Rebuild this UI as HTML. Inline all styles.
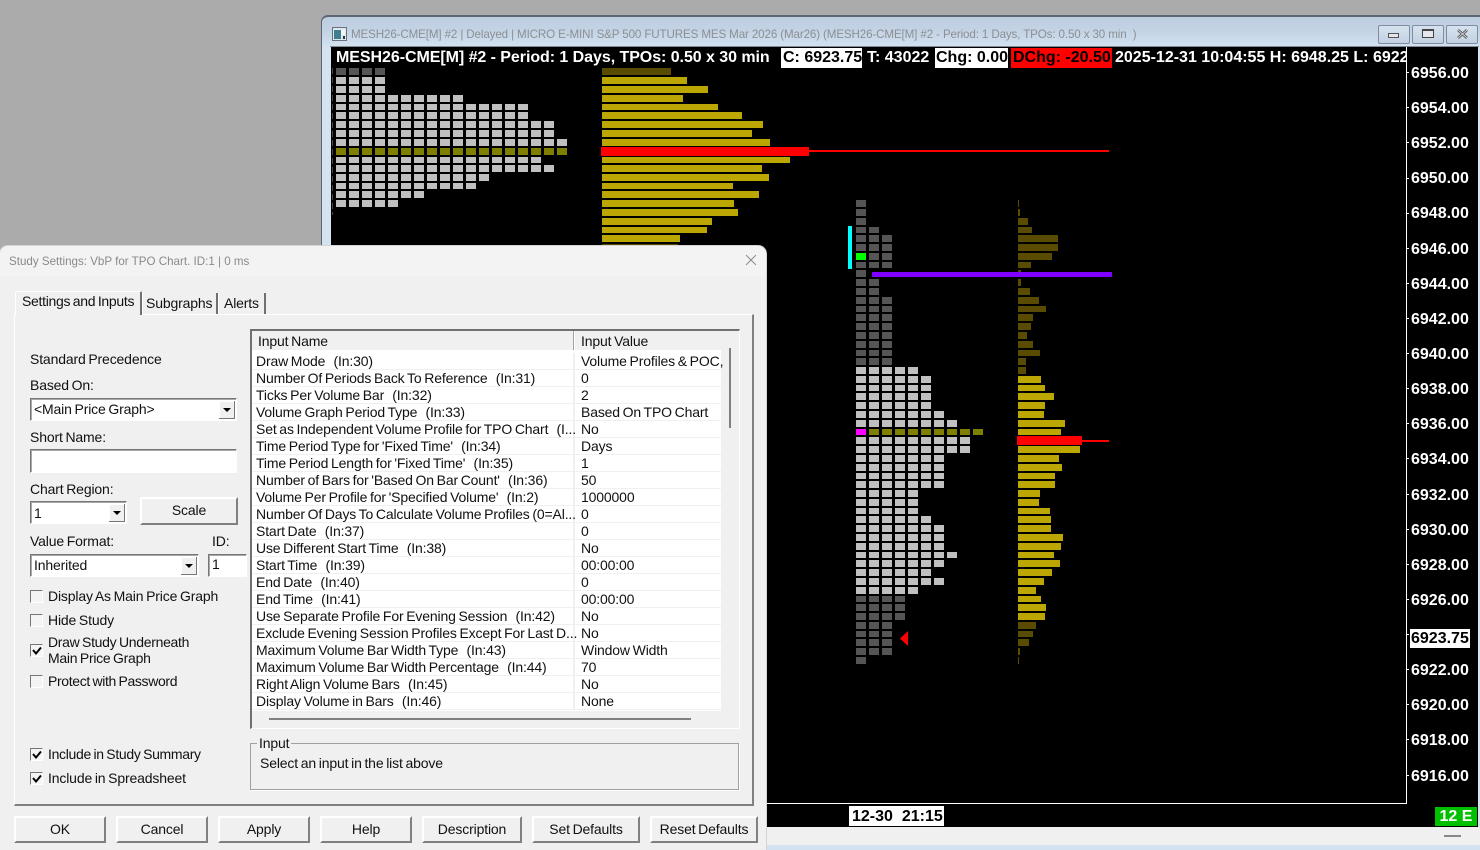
<!DOCTYPE html>
<html><head><meta charset="utf-8"><title>Study Settings</title>
<style>
html,body{margin:0;padding:0;width:1480px;height:850px;overflow:hidden;background:#ababab}
body{position:relative;font-family:"Liberation Sans",Arial,sans-serif}
div,span,i,b{position:absolute;white-space:pre}
i{display:block;height:7px}
i.s{height:6px}
.g{background:repeating-linear-gradient(90deg,#c0c0c0 0 10px,#000 10px 13px)}
.d{background:repeating-linear-gradient(90deg,#555 0 10px,#000 10px 13px)}
.o{background:repeating-linear-gradient(90deg,#808000 0 10px,#000 10px 13px)}
.v{background:#bca602}
.w{background:#594c00}
.c{font:bold 16px/20px "Liberation Sans",Arial,sans-serif;color:#fff;top:48px;height:20px}
.p{font:bold 16px/18px "Liberation Sans",Arial,sans-serif;color:#fff;left:1411px}
.k{background:#fff;left:1407px;width:2px;height:1px}
.t{font:14px/18px "Liberation Sans",Arial,sans-serif;color:#111;letter-spacing:-.15px;word-spacing:-1px}
.f{background:#fff;border-top:1px solid #777;border-left:1px solid #777;border-right:1px solid #fff;border-bottom:1px solid #fff;box-shadow:inset 1px 1px 0 #a8a8a8;box-sizing:border-box}
.a{right:2px;top:2px;width:16px;height:18px;background:#f0f0f0;border-right:1px solid #777;border-bottom:1px solid #777;box-shadow:inset 1px 1px 0 #fff;box-sizing:border-box}
.a:after{content:"";position:absolute;left:4px;top:7px;border-left:4px solid transparent;border-right:4px solid transparent;border-top:4px solid #000}
.b{top:816px;height:27px;background:#f0f0f0;border-top:2px solid #fff;border-left:2px solid #fff;border-right:2px solid #808080;border-bottom:2px solid #808080;box-sizing:border-box;text-align:center;font:14px/23px "Liberation Sans",Arial,sans-serif;color:#111;letter-spacing:-.15px;word-spacing:-1px}
.x{left:30px;width:13px;height:13px;background:#f4f4f4;border-top:1px solid #777;border-left:1px solid #777;border-right:1px solid #fff;border-bottom:1px solid #fff;box-sizing:border-box}
.x svg{position:absolute;left:1px;top:1px}
.r{left:252px;width:469px;height:16px;border-bottom:1px solid #f0f0f0;font:14px/16px "Liberation Sans",Arial,sans-serif;color:#111;background:#fff;letter-spacing:-.15px;word-spacing:-1px}
.r span{left:4px;top:0}
.r b{font-weight:normal;left:329px;top:0}
.r u{position:absolute;left:321px;top:0;width:2px;height:17px;background:#f0f0f0}
</style></head><body>

<!-- chart window -->
<div style="left:321px;top:15px;width:1159px;height:835px;background:linear-gradient(#bccde0 0,#c4d4e5 15px,#d5e3f1 31px,#d5e3f1 100%);border-top:2px solid #5c6672;border-left:1px solid #5c6672;border-radius:7px 0 0 0;box-sizing:border-box"></div>
<svg style="position:absolute;left:332px;top:27px" width="15" height="14"><rect x=".5" y=".5" width="14" height="13" fill="#dfe8ee" stroke="#68727c"/><rect x="2" y="3" width="7" height="9" fill="#3f7f8f"/><rect x="9" y="3" width="4" height="5" fill="#f4f4f4"/><rect x="11" y="9" width="2" height="3" fill="#333"/></svg>
<div style="left:351px;top:26px;font:11.6px/18px 'Liberation Sans',Arial,sans-serif;color:#8b8f94;letter-spacing:-.125px">MESH26-CME[M] #2 | Delayed | MICRO E-MINI S&amp;P 500 FUTURES MES Mar 2026 (Mar26) (MESH26-CME[M] #2 - Period: 1 Days, TPOs: 0.50 x 30 min  )</div>

<div style="left:1378px;top:25px;width:32px;height:19px;border:1px solid #7e8da0;border-radius:2px;box-sizing:border-box;background:linear-gradient(#d6e2ee,#c3d2e2)"><div style="left:9px;top:7px;width:11px;height:5px;background:#e4e8ec;border:1px solid #555;box-sizing:border-box"></div></div>
<div style="left:1412px;top:25px;width:32px;height:19px;border:1px solid #7e8da0;border-radius:2px;box-sizing:border-box;background:linear-gradient(#d6e2ee,#c3d2e2)"><div style="left:9px;top:3px;width:12px;height:9px;border:1px solid #444;border-top-width:2px;box-sizing:border-box;background:#e4e8ec"></div></div>
<div style="left:1446px;top:25px;width:32px;height:19px;border:1px solid #7e8da0;border-radius:2px;box-sizing:border-box;background:linear-gradient(#d6e2ee,#c3d2e2)">
<svg style="position:absolute;left:9px;top:2px" width="13" height="12"><path d="M2 2L11 10M11 2L2 10" stroke="#555" stroke-width="2.6"/><path d="M2 2L11 10M11 2L2 10" stroke="#eef" stroke-width=".8"/></svg></div>

<div style="left:330px;top:46px;width:1149px;height:1px;background:#808a96"></div>
<div style="left:331px;top:47px;width:1147px;height:780px;background:#000"></div>
<div style="left:1406px;top:47px;width:1px;height:757px;background:#fff"></div>
<div style="left:767px;top:803px;width:640px;height:1px;background:#fff"></div>
<div style="left:767px;top:827px;width:713px;height:18px;background:#f0f0f0"></div>
<div style="left:767px;top:845px;width:713px;height:5px;background:#d3e2f1"></div>
<div style="left:1444px;top:835px;width:17px;height:2px;background:#888"></div>
<div style="left:1478px;top:47px;width:2px;height:780px;background:#d5e3f1"></div>

<!-- header -->
<span class="c" style="left:336px;letter-spacing:-.055px">MESH26-CME[M] #2 - Period: 1 Days, TPOs: 0.50 x 30 min</span>
<span class="c" style="left:781px;width:81px;background:#fff;color:#000;padding-left:2px;box-sizing:border-box">C: 6923.75</span>
<span class="c" style="left:867px">T: 43022</span>
<span class="c" style="left:935px;width:73px;background:#fff;color:#000;padding-left:1px;box-sizing:border-box">Chg: 0.00</span>
<span class="c" style="left:1011px;width:101px;background:#f00;color:#000;padding-left:2px;box-sizing:border-box">DChg: -20.50</span>
<div style="left:1115px;top:48px;width:291px;height:20px;overflow:hidden"><span class="c" style="left:0;top:0">2025-12-31 10:04:55 H: 6948.25 L: 6922.00</span></div>

<!-- price axis -->
<span class="p" style="top:65px">6956.00</span><span class="p" style="top:100px">6954.00</span><span class="p" style="top:135px">6952.00</span><span class="p" style="top:170px">6950.00</span><span class="p" style="top:205px">6948.00</span><span class="p" style="top:241px">6946.00</span><span class="p" style="top:276px">6944.00</span><span class="p" style="top:311px">6942.00</span><span class="p" style="top:346px">6940.00</span><span class="p" style="top:381px">6938.00</span><span class="p" style="top:416px">6936.00</span><span class="p" style="top:451px">6934.00</span><span class="p" style="top:487px">6932.00</span><span class="p" style="top:522px">6930.00</span><span class="p" style="top:557px">6928.00</span><span class="p" style="top:592px">6926.00</span><span class="p" style="top:662px">6922.00</span><span class="p" style="top:697px">6920.00</span><span class="p" style="top:732px">6918.00</span><span class="p" style="top:768px">6916.00</span>
<div class="k" style="top:72px"></div><div class="k" style="top:107px"></div><div class="k" style="top:142px"></div><div class="k" style="top:178px"></div><div class="k" style="top:213px"></div><div class="k" style="top:248px"></div><div class="k" style="top:283px"></div><div class="k" style="top:318px"></div><div class="k" style="top:353px"></div><div class="k" style="top:388px"></div><div class="k" style="top:423px"></div><div class="k" style="top:458px"></div><div class="k" style="top:494px"></div><div class="k" style="top:529px"></div><div class="k" style="top:564px"></div><div class="k" style="top:599px"></div><div class="k" style="top:634px"></div><div class="k" style="top:669px"></div><div class="k" style="top:704px"></div><div class="k" style="top:739px"></div><div class="k" style="top:775px"></div>
<span class="p" style="left:1410px;top:629px;width:60px;height:19px;background:#fff;color:#000;line-height:19px;padding-left:1px;box-sizing:border-box">6923.75</span>

<!-- bottom bar -->
<span class="p" style="left:849px;top:806px;width:95px;height:20px;background:#fff;color:#000;line-height:22px;padding-left:3px;box-sizing:border-box">12-30  21:15</span>
<span class="p" style="left:1435px;top:807px;width:42px;height:19px;background:#00c000;line-height:19px;text-align:center">12 E</span>

<!-- TPO profile 1 -->
<div style="left:332px;top:68px;width:1px;height:147px;background:repeating-linear-gradient(#444 0 6px,#000 6px 9px)"></div>
<div style="left:336px;top:0">
<i class="d" style="top:68px;width:49px"></i><i class="g" style="top:77px;width:49px"></i><i class="g" style="top:86px;width:49px"></i><i class="g" style="top:95px;width:127px"></i><i class="g s" style="top:104px;width:192px"></i><i class="g" style="top:112px;width:192px"></i><i class="g" style="top:121px;width:218px"></i><i class="g" style="top:130px;width:218px"></i><i class="g" style="top:139px;width:231px"></i><i class="o" style="top:148px;width:231px"></i><i class="g s" style="top:157px;width:205px"></i><i class="g" style="top:165px;width:218px"></i><i class="g" style="top:174px;width:153px"></i><i class="g s" style="top:183px;width:140px"></i><i class="g" style="top:191px;width:88px"></i><i class="g" style="top:200px;width:62px"></i>
</div>

<!-- Volume profile 1 -->
<div style="left:602px;top:0">
<i class="w" style="top:68px;width:69px"></i><i class="v" style="top:77px;width:85px"></i><i class="v" style="top:86px;width:106px"></i><i class="v" style="top:95px;width:81px"></i><i class="v s" style="top:104px;width:116px"></i><i class="v" style="top:112px;width:140px"></i><i class="v" style="top:121px;width:161px"></i><i class="v" style="top:130px;width:150px"></i><i class="v" style="top:139px;width:168px"></i><i class="v s" style="top:157px;width:188px"></i><i class="v" style="top:165px;width:160px"></i><i class="v" style="top:174px;width:167px"></i><i class="v s" style="top:183px;width:131px"></i><i class="v" style="top:191px;width:157px"></i><i class="v" style="top:200px;width:132px"></i><i class="v" style="top:209px;width:136px"></i><i class="v" style="top:218px;width:110px"></i><i class="v s" style="top:227px;width:105px"></i><i class="v" style="top:235px;width:78px"></i><i class="w" style="top:244px;width:76px"></i>
</div>
<div style="left:601px;top:147px;width:208px;height:9px;background:#f00"></div>
<div style="left:809px;top:150px;width:300px;height:2px;background:#f00"></div>

<!-- TPO profile 2 -->
<div style="left:856px;top:0">
<i class="d" style="top:200px;width:10px"></i><i class="d" style="top:209px;width:10px"></i><i class="d" style="top:218px;width:10px"></i><i class="d s" style="top:227px;width:23px"></i><i class="d" style="top:235px;width:36px"></i><i class="d" style="top:244px;width:36px"></i><i class="d" style="top:253px;width:36px"></i><i class="d s" style="top:262px;width:36px"></i><i class="d" style="top:270px;width:10px"></i><i class="d" style="top:279px;width:23px"></i><i class="d" style="top:288px;width:23px"></i><i class="d" style="top:297px;width:36px"></i><i class="d s" style="top:306px;width:36px"></i><i class="d" style="top:314px;width:36px"></i><i class="d" style="top:323px;width:36px"></i><i class="d" style="top:332px;width:36px"></i><i class="d" style="top:341px;width:36px"></i><i class="d s" style="top:350px;width:36px"></i><i class="d" style="top:358px;width:36px"></i><i class="g" style="top:367px;width:62px"></i><i class="g" style="top:376px;width:75px"></i><i class="g s" style="top:385px;width:75px"></i><i class="g" style="top:393px;width:75px"></i><i class="g" style="top:402px;width:75px"></i><i class="g" style="top:411px;width:88px"></i><i class="g" style="top:420px;width:101px"></i><i class="o s" style="top:429px;width:127px;height:6px"></i><i class="g" style="top:437px;width:114px"></i><i class="g" style="top:446px;width:114px"></i><i class="g" style="top:455px;width:88px"></i><i class="g" style="top:464px;width:88px"></i><i class="g s" style="top:473px;width:88px"></i><i class="g" style="top:481px;width:88px"></i><i class="g" style="top:490px;width:62px"></i><i class="g" style="top:499px;width:62px"></i><i class="g s" style="top:508px;width:62px"></i><i class="g" style="top:516px;width:75px"></i><i class="g" style="top:525px;width:88px"></i><i class="g" style="top:534px;width:88px"></i><i class="g" style="top:543px;width:88px"></i><i class="g s" style="top:552px;width:101px"></i><i class="g" style="top:560px;width:88px"></i><i class="g" style="top:569px;width:75px"></i><i class="g" style="top:578px;width:88px"></i><i class="g" style="top:587px;width:62px"></i><i class="d s" style="top:596px;width:49px"></i><i class="d" style="top:604px;width:49px"></i><i class="d" style="top:613px;width:49px"></i><i class="d" style="top:622px;width:36px"></i><i class="d s" style="top:631px;width:36px"></i><i class="d" style="top:639px;width:36px"></i><i class="d" style="top:648px;width:36px"></i><i class="d" style="top:657px;width:10px"></i>
</div>
<div style="left:856px;top:253px;width:10px;height:7px;background:#0f0"></div>
<div style="left:856px;top:429px;width:10px;height:6px;background:#f0f"></div>
<div style="left:848px;top:226px;width:4px;height:43px;background:#0ff"></div>
<svg style="position:absolute;left:900px;top:631px" width="8" height="15"><path d="M8 0V15L0 7.5Z" fill="#f00"/></svg>

<!-- Volume profile 2 -->
<div style="left:1018px;top:0">
<i class="w" style="top:200px;width:1px"></i><i class="w" style="top:209px;width:2px"></i><i class="w" style="top:218px;width:10px"></i><i class="w s" style="top:227px;width:14px"></i><i class="w" style="top:235px;width:40px"></i><i class="w" style="top:244px;width:40px"></i><i class="w" style="top:253px;width:34px"></i><i class="w s" style="top:262px;width:13px"></i><i class="w" style="top:270px;width:3px"></i><i class="w" style="top:279px;width:3px"></i><i class="w" style="top:288px;width:12px"></i><i class="w" style="top:297px;width:21px"></i><i class="w s" style="top:306px;width:28px"></i><i class="w" style="top:314px;width:15px"></i><i class="w" style="top:323px;width:13px"></i><i class="w" style="top:332px;width:9px"></i><i class="w" style="top:341px;width:15px"></i><i class="w s" style="top:350px;width:22px"></i><i class="w" style="top:358px;width:8px"></i><i class="w" style="top:367px;width:8px"></i><i class="v" style="top:376px;width:23px"></i><i class="v s" style="top:385px;width:27px"></i><i class="v" style="top:393px;width:36px"></i><i class="v" style="top:402px;width:27px"></i><i class="v" style="top:411px;width:26px"></i><i class="v" style="top:420px;width:47px"></i><i class="v s" style="top:429px;width:43px"></i><i class="v" style="top:446px;width:62px"></i><i class="v" style="top:455px;width:41px"></i><i class="v" style="top:464px;width:44px"></i><i class="v s" style="top:473px;width:37px"></i><i class="v" style="top:481px;width:37px"></i><i class="v" style="top:490px;width:22px"></i><i class="v" style="top:499px;width:21px"></i><i class="v s" style="top:508px;width:32px"></i><i class="v" style="top:516px;width:33px"></i><i class="v" style="top:525px;width:33px"></i><i class="v" style="top:534px;width:45px"></i><i class="v" style="top:543px;width:43px"></i><i class="v s" style="top:552px;width:36px"></i><i class="v" style="top:560px;width:42px"></i><i class="v" style="top:569px;width:34px"></i><i class="v" style="top:578px;width:26px"></i><i class="v" style="top:587px;width:18px"></i><i class="v s" style="top:596px;width:23px"></i><i class="v" style="top:604px;width:28px"></i><i class="v" style="top:613px;width:27px"></i><i class="w" style="top:622px;width:18px"></i><i class="w s" style="top:631px;width:15px"></i><i class="w" style="top:639px;width:11px"></i><i class="w" style="top:648px;width:2px"></i><i class="w" style="top:657px;width:1px"></i>
</div>
<div style="left:1017px;top:436px;width:65px;height:9px;background:#f00"></div>
<div style="left:1082px;top:440px;width:27px;height:2px;background:#f00"></div>
<div style="left:872px;top:272px;width:240px;height:5px;background:#8000ff"></div>

<!-- dialog -->
<div style="left:0;top:246px;width:766px;height:604px;background:#f0f0f0;border-radius:8px 8px 0 0;box-shadow:0 0 0 1px #d4d4d4;overflow:hidden">
<div style="left:0;top:0;width:766px;height:30px;background:#f3f3f3"></div>
</div>
<div style="left:9px;top:253px;font:11.6px/18px 'Liberation Sans',Arial,sans-serif;color:#8a8a8a">Study Settings: VbP for TPO Chart. ID:1 | 0 ms</div>
<svg style="position:absolute;left:745px;top:254px" width="12" height="12"><path d="M1 1L11 11M11 1L1 11" stroke="#8a8a8a" stroke-width="1"/></svg>

<!-- tab panel -->
<div style="left:14px;top:314px;width:740px;height:492px;border-top:1px solid #fff;border-left:1px solid #fff;border-right:2px solid #808080;border-bottom:2px solid #808080;box-sizing:border-box"></div>
<div style="left:15px;top:291px;width:127px;height:24px;background:#f0f0f0;border-top:1px solid #fff;border-left:1px solid #fff;border-right:2px solid #707070;box-sizing:border-box;border-radius:2px 2px 0 0"></div>
<div style="left:142px;top:293px;width:76px;height:21px;border-left:1px solid #fff;border-right:2px solid #707070;box-sizing:border-box"></div>
<div style="left:218px;top:293px;width:48px;height:21px;border-left:1px solid #fff;border-right:2px solid #707070;box-sizing:border-box"></div>
<span class="t" style="left:22px;top:292px;letter-spacing:-.3px">Settings and Inputs</span>
<span class="t" style="left:146px;top:294px">Subgraphs</span>
<span class="t" style="left:224px;top:294px">Alerts</span>

<span class="t" style="left:30px;top:350px">Standard Precedence</span>
<span class="t" style="left:30px;top:376px">Based On:</span>
<div class="f" style="left:30px;top:398px;width:207px;height:23px"><span class="t" style="left:3px;top:1px">&lt;Main Price Graph&gt;</span><div class="a" style="right:1px;top:2px"></div></div>
<span class="t" style="left:30px;top:428px">Short Name:</span>
<div class="f" style="left:30px;top:449px;width:207px;height:24px"></div>
<span class="t" style="left:30px;top:480px">Chart Region:</span>
<div class="f" style="left:30px;top:501px;width:97px;height:23px"><span class="t" style="left:3px;top:2px">1</span><div class="a" style="right:1px;top:2px"></div></div>
<div class="b" style="left:140px;top:497px;width:98px;height:28px">Scale</div>
<span class="t" style="left:30px;top:532px">Value Format:</span>
<span class="t" style="left:212px;top:532px">ID:</span>
<div class="f" style="left:30px;top:554px;width:169px;height:23px"><span class="t" style="left:3px;top:1px">Inherited</span><div class="a" style="right:1px;top:2px"></div></div>
<div class="f" style="left:208px;top:554px;width:39px;height:23px"><span class="t" style="left:3px;top:0">1</span></div>

<div class="x" style="top:590px"></div><span class="t" style="left:48px;top:587px">Display As Main Price Graph</span>
<div class="x" style="top:614px"></div><span class="t" style="left:48px;top:611px">Hide Study</span>
<div class="x" style="top:644px"><svg width="10" height="10"><path d="M1 4L4 7.5L9 1.5" fill="none" stroke="#000" stroke-width="2"/></svg></div><span class="t" style="left:48px;top:633px;letter-spacing:-.3px">Draw Study Underneath</span><span class="t" style="left:48px;top:649px;letter-spacing:-.27px">Main Price Graph</span>
<div class="x" style="top:675px"></div><span class="t" style="left:48px;top:672px;letter-spacing:-.35px">Protect with Password</span>
<div class="x" style="top:748px"><svg width="10" height="10"><path d="M1 4L4 7.5L9 1.5" fill="none" stroke="#000" stroke-width="2"/></svg></div><span class="t" style="left:48px;top:745px;letter-spacing:-.32px">Include in Study Summary</span>
<div class="x" style="top:772px"><svg width="10" height="10"><path d="M1 4L4 7.5L9 1.5" fill="none" stroke="#000" stroke-width="2"/></svg></div><span class="t" style="left:48px;top:769px">Include in Spreadsheet</span>

<!-- table -->
<div style="left:250px;top:329px;width:490px;height:400px;border-top:2px solid #707070;border-left:2px solid #707070;border-right:1px solid #fff;border-bottom:1px solid #fff;box-sizing:border-box"></div>
<span class="t" style="left:258px;top:332px">Input Name</span>
<span class="t" style="left:581px;top:332px">Input Value</span>
<div style="left:573px;top:331px;width:1px;height:19px;background:#a0a0a0"></div>
<div style="left:574px;top:331px;width:1px;height:19px;background:#fff"></div>
<div style="left:252px;top:350px;width:469px;height:3px;background:#fff"></div>
<div style="left:252px;top:353px;width:469px;height:358px;background:#fff"></div>
<div class="r" style="top:353px"><u></u><span>Draw Mode   (In:30)</span><b>Volume Profiles &amp; POC,</b></div>
<div class="r" style="top:370px"><u></u><span>Number Of Periods Back To Reference   (In:31)</span><b>0</b></div>
<div class="r" style="top:387px"><u></u><span>Ticks Per Volume Bar   (In:32)</span><b>2</b></div>
<div class="r" style="top:404px"><u></u><span>Volume Graph Period Type   (In:33)</span><b>Based On TPO Chart</b></div>
<div class="r" style="top:421px"><u></u><span>Set as Independent Volume Profile for TPO Chart   (I...</span><b>No</b></div>
<div class="r" style="top:438px"><u></u><span>Time Period Type for 'Fixed Time'   (In:34)</span><b>Days</b></div>
<div class="r" style="top:455px"><u></u><span>Time Period Length for 'Fixed Time'   (In:35)</span><b>1</b></div>
<div class="r" style="top:472px"><u></u><span>Number of Bars for 'Based On Bar Count'   (In:36)</span><b>50</b></div>
<div class="r" style="top:489px"><u></u><span>Volume Per Profile for 'Specified Volume'   (In:2)</span><b>1000000</b></div>
<div class="r" style="top:506px"><u></u><span>Number Of Days To Calculate Volume Profiles (0=Al...</span><b>0</b></div>
<div class="r" style="top:523px"><u></u><span>Start Date   (In:37)</span><b>0</b></div>
<div class="r" style="top:540px"><u></u><span>Use Different Start Time   (In:38)</span><b>No</b></div>
<div class="r" style="top:557px"><u></u><span>Start Time   (In:39)</span><b>00:00:00</b></div>
<div class="r" style="top:574px"><u></u><span>End Date   (In:40)</span><b>0</b></div>
<div class="r" style="top:591px"><u></u><span>End Time   (In:41)</span><b>00:00:00</b></div>
<div class="r" style="top:608px"><u></u><span>Use Separate Profile For Evening Session   (In:42)</span><b>No</b></div>
<div class="r" style="top:625px"><u></u><span>Exclude Evening Session Profiles Except For Last D...</span><b>No</b></div>
<div class="r" style="top:642px"><u></u><span>Maximum Volume Bar Width Type   (In:43)</span><b>Window Width</b></div>
<div class="r" style="top:659px"><u></u><span>Maximum Volume Bar Width Percentage   (In:44)</span><b>70</b></div>
<div class="r" style="top:676px"><u></u><span>Right Align Volume Bars   (In:45)</span><b>No</b></div>
<div class="r" style="top:693px"><u></u><span>Display Volume in Bars   (In:46)</span><b>None</b></div>
<div style="left:729px;top:348px;width:2px;height:80px;background:#808080"></div>
<div style="left:269px;top:718px;width:422px;height:2px;background:#808080"></div>

<!-- group -->
<div style="left:250px;top:743px;width:489px;height:47px;border:1px solid #a0a0a0;box-shadow:1px 1px 0 #fff;box-sizing:border-box"></div>
<span class="t" style="left:257px;top:734px;background:#f0f0f0;padding:0 2px">Input</span>
<span class="t" style="left:260px;top:754px">Select an input in the list above</span>

<!-- buttons -->
<div class="b" style="left:14px;width:92px">OK</div>
<div class="b" style="left:116px;width:92px">Cancel</div>
<div class="b" style="left:218px;width:92px">Apply</div>
<div class="b" style="left:320px;width:92px">Help</div>
<div class="b" style="left:422px;width:100px">Description</div>
<div class="b" style="left:532px;width:108px">Set Defaults</div>
<div class="b" style="left:650px;width:108px">Reset Defaults</div>

</body></html>
